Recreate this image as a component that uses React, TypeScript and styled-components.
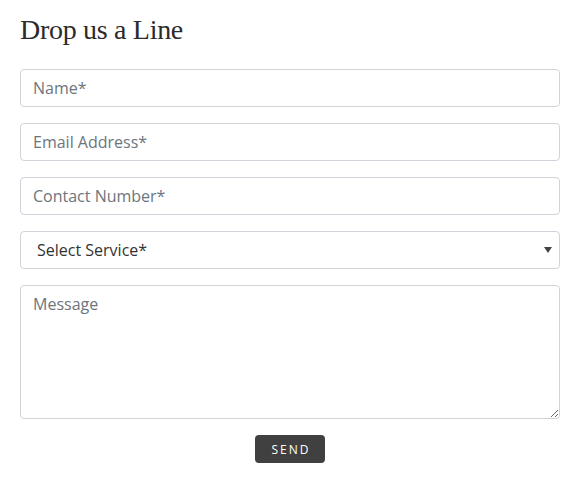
import React from "react";
import styled, { createGlobalStyle } from "styled-components";

const Global = createGlobalStyle`
  html, body { margin: 0; padding: 0; background: #fff; }
  * { box-sizing: border-box; }
`;

const Wrap = styled.div`
  padding: 13px 14px 20px 20px;
  width: 574px;
`;

const Heading = styled.h2`
  margin: 0 0 22px 0;
  font-family: "Liberation Serif", "DejaVu Serif", serif;
  font-weight: 400;
  font-size: 28px;
  line-height: 34px;
  letter-spacing: -0.3px;
  color: #2b2b2b;
`;

const Form = styled.form`
  display: flex;
  flex-direction: column;
  gap: 16px;
  width: 540px;
`;

const fieldBase = `
  width: 100%;
  border: 1px solid #ced4da;
  border-radius: 4px;
  background: #fff;
  font-family: "Open Sans", "Noto Sans", sans-serif;
  font-size: 16px;
  color: #495057;
  outline: none;
  &::placeholder { color: #6c757d; opacity: 1; }
`;

const Input = styled.input`
  ${fieldBase}
  height: 38px;
  padding: 6px 12px;
`;

const Select = styled.select`
  ${fieldBase}
  height: 38px;
  padding: 6px 24px 6px 16px;
  color: #333;
  appearance: none;
  -webkit-appearance: none;
  background-image: url("data:image/svg+xml,%3Csvg xmlns='http://www.w3.org/2000/svg' width='8' height='6'%3E%3Cpath d='M0 0h8L4 6z' fill='%23444'/%3E%3C/svg%3E");
  background-repeat: no-repeat;
  background-position: right 7px center;
`;

const TextArea = styled.textarea`
  ${fieldBase}
  height: 134px;
  padding: 6px 12px;
  line-height: 24px;
  resize: both;
`;

const ButtonRow = styled.div`
  display: flex;
  justify-content: center;
`;

const SendButton = styled.button`
  width: 70px;
  height: 28px;
  border: none;
  border-radius: 4px;
  background: #404040;
  color: #fff;
  font-family: "Open Sans", "Noto Sans", sans-serif;
  font-size: 12px;
  font-weight: 400;
  letter-spacing: 2px;
  padding: 0 0 0 2px;
  cursor: pointer;
`;

export default function App() {
  return (
    <>
      <Global />
      <Wrap>
        <Heading>Drop us a Line</Heading>
        <Form onSubmit={(e) => e.preventDefault()}>
          <Input placeholder="Name*" />
          <Input placeholder="Email Address*" />
          <Input placeholder="Contact Number*" />
          <Select defaultValue="">
            <option value="">Select Service*</option>
          </Select>
          <TextArea placeholder="Message" />
          <ButtonRow>
            <SendButton type="submit">SEND</SendButton>
          </ButtonRow>
        </Form>
      </Wrap>
    </>
  );
}
